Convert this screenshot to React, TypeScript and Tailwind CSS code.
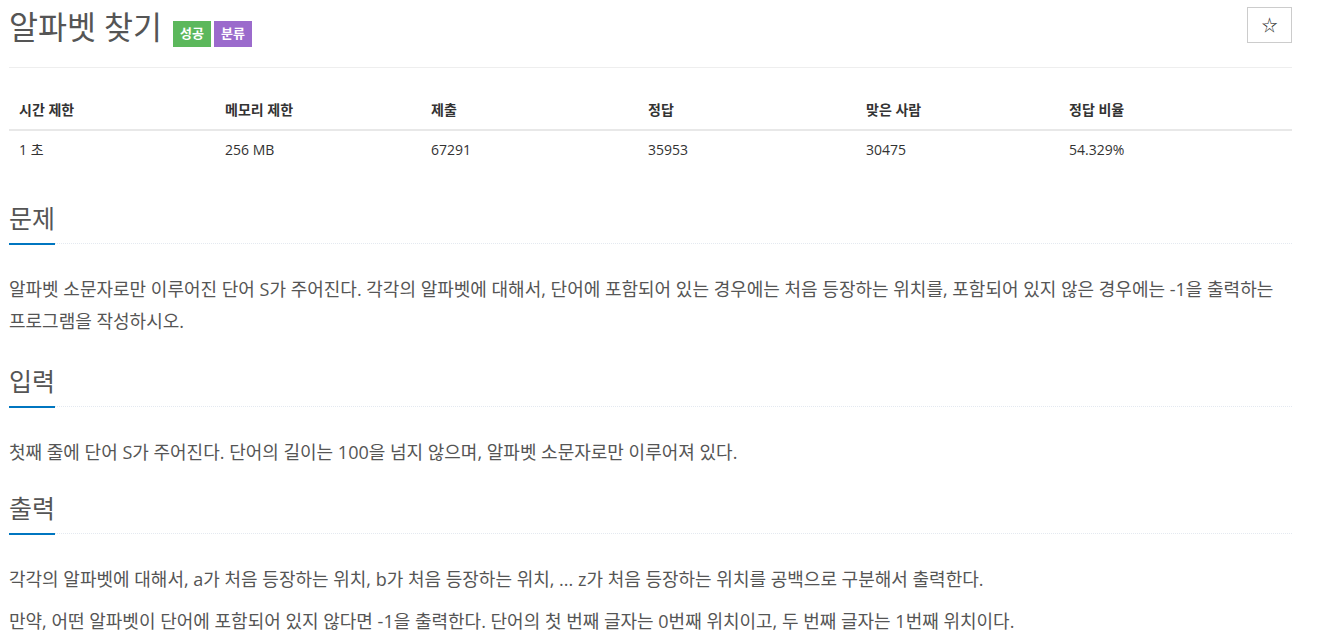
import React from "react";

const font = { fontFamily: '"Open Sans", "Noto Sans CJK KR", sans-serif' };

function Headline({ title, mt }: { title: string; mt: string }) {
  return (
    <div className={`${mt} mb-[29px] border-b border-dotted border-[#e4e9f0]`}>
      <h2 className="inline-block -mb-[2px] pb-[8px] border-b-2 border-[#0076c0] text-[25px] leading-[33px] text-[#555] font-normal">
        {title}
      </h2>
    </div>
  );
}

function P({ children }: { children: React.ReactNode }) {
  return <p className="mb-[10px] text-[18px] leading-[32px] text-[#555]">{children}</p>;
}

export default function App() {
  const heads = ["시간 제한", "메모리 제한", "제출", "정답", "맞은 사람", "정답 비율"];
  const vals = ["1 초", "256 MB", "67291", "35953", "30475", "54.329%"];
  return (
    <div className="bg-white min-h-screen" style={font}>
      <div className="ml-[9px] w-[1283px]">
        <div className="flex justify-between items-start pt-[7px] pb-[20px] border-b border-[#eee]">
          <div className="flex items-start">
            <h1 className="text-[31.5px] leading-[40px] text-[#555] font-normal">알파벳 찾기</h1>
            <span className="ml-[11px] mt-[14px] h-[26px] px-[7px] flex items-center bg-[#5cb85c] text-white text-[13px] font-bold">성공</span>
            <span className="ml-[3px] mt-[14px] h-[26px] px-[7px] flex items-center bg-[#9b6bcc] text-white text-[13px] font-bold">분류</span>
          </div>
          <button className="w-[45px] h-[36px] border border-[#ccc] bg-white flex items-center justify-center text-[16px] text-[#333]">☆</button>
        </div>

        <div className="mt-[23px] text-[14px] text-[#333]">
          <div className="grid grid-cols-[206px_206px_217px_218px_203px_1fr] border-b-2 border-[#e8e8e8]">
            {heads.map((h) => (
              <div key={h} className="px-[10px] py-[9px] leading-[20px] font-bold">{h}</div>
            ))}
          </div>
          <div className="grid grid-cols-[206px_206px_217px_218px_203px_1fr]">
            {vals.map((v) => (
              <div key={v} className="px-[10px] py-[9px] leading-[20px]">{v}</div>
            ))}
          </div>
        </div>

        <Headline title="문제" mt="mt-[33px]" />
        <P>
          알파벳 소문자로만 이루어진 단어 S가 주어진다. 각각의 알파벳에 대해서, 단어에 포함되어 있는 경우에는 처음 등장하는 위치를, 포함되어 있지 않은 경우에는 -1을 출력하는 프로그램을 작성하시오.
        </P>

        <Headline title="입력" mt="mt-[28px]" />
        <P>첫째 줄에 단어 S가 주어진다. 단어의 길이는 100을 넘지 않으며, 알파벳 소문자로만 이루어져 있다.</P>

        <Headline title="출력" mt="mt-[24px]" />
        <P>각각의 알파벳에 대해서, a가 처음 등장하는 위치, b가 처음 등장하는 위치, ... z가 처음 등장하는 위치를 공백으로 구분해서 출력한다.</P>
        <P>만약, 어떤 알파벳이 단어에 포함되어 있지 않다면 -1을 출력한다. 단어의 첫 번째 글자는 0번째 위치이고, 두 번째 글자는 1번째 위치이다.</P>
      </div>
    </div>
  );
}
